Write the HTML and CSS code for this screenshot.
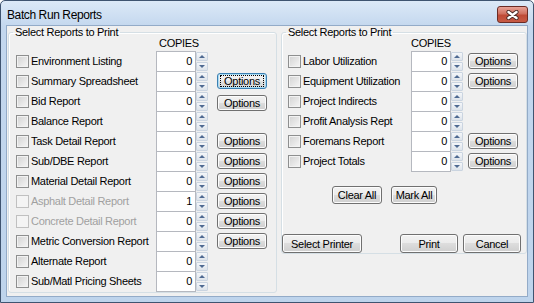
FILE: index.html
```html
<!DOCTYPE html>
<html lang="en">

<head>
    <meta charset="UTF-8">
    <meta name="viewport" content="width=device-width, initial-scale=1.0">
    <title>Batch Run Reports</title>
    <link rel="stylesheet" href="styles.css">
</head>

<body>
    <div class="window">
        <div class="titlebar">
            <span class="title">Batch Run Reports</span>
            <button class="close">
                <svg width="13" height="10" viewBox="0 0 13 10">
                    <path d="M2.5 2 L10.5 8 M10.5 2 L2.5 8" stroke="#4a2a26" stroke-width="4.2" stroke-linecap="round" />
                    <path d="M2.5 2 L10.5 8 M10.5 2 L2.5 8" stroke="#fff" stroke-width="2.4" stroke-linecap="round" />
                </svg>
            </button>
        </div>
        <div class="client">
            <fieldset class="group left-group">
                <legend>Select Reports to Print</legend>
                <div class="copies">COPIES</div>
                <div class="rows">
                    <div class="row">
                        <label class="check"><span class="box"></span>Environment Listing</label>
                        <span class="num">0</span>
                        <span class="arrows"><span class="up"></span><span class="down"></span></span>
                    </div>
                    <div class="row">
                        <label class="check"><span class="box"></span>Summary Spreadsheet</label>
                        <span class="num">0</span>
                        <span class="arrows"><span class="up"></span><span class="down"></span></span>
                        <button class="btn opt focus"><span>Options</span></button>
                    </div>
                    <div class="row">
                        <label class="check"><span class="box"></span>Bid Report</label>
                        <span class="num">0</span>
                        <span class="arrows"><span class="up"></span><span class="down"></span></span>
                        <button class="btn opt low">Options</button>
                    </div>
                    <div class="row">
                        <label class="check"><span class="box"></span>Balance Report</label>
                        <span class="num">0</span>
                        <span class="arrows"><span class="up"></span><span class="down"></span></span>
                    </div>
                    <div class="row">
                        <label class="check"><span class="box"></span>Task Detail Report</label>
                        <span class="num">0</span>
                        <span class="arrows"><span class="up"></span><span class="down"></span></span>
                        <button class="btn opt">Options</button>
                    </div>
                    <div class="row">
                        <label class="check"><span class="box"></span>Sub/DBE Report</label>
                        <span class="num">0</span>
                        <span class="arrows"><span class="up"></span><span class="down"></span></span>
                        <button class="btn opt">Options</button>
                    </div>
                    <div class="row">
                        <label class="check"><span class="box"></span>Material Detail Report</label>
                        <span class="num">0</span>
                        <span class="arrows"><span class="up"></span><span class="down"></span></span>
                        <button class="btn opt">Options</button>
                    </div>
                    <div class="row disabled">
                        <label class="check"><span class="box"></span>Asphalt Detail Report</label>
                        <span class="num">1</span>
                        <span class="arrows"><span class="up"></span><span class="down"></span></span>
                        <button class="btn opt">Options</button>
                    </div>
                    <div class="row disabled">
                        <label class="check"><span class="box"></span>Concrete Detail Report</label>
                        <span class="num">0</span>
                        <span class="arrows"><span class="up"></span><span class="down"></span></span>
                        <button class="btn opt">Options</button>
                    </div>
                    <div class="row">
                        <label class="check"><span class="box"></span>Metric Conversion Report</label>
                        <span class="num">0</span>
                        <span class="arrows"><span class="up"></span><span class="down"></span></span>
                        <button class="btn opt">Options</button>
                    </div>
                    <div class="row">
                        <label class="check"><span class="box"></span>Alternate Report</label>
                        <span class="num">0</span>
                        <span class="arrows"><span class="up"></span><span class="down"></span></span>
                    </div>
                    <div class="row">
                        <label class="check"><span class="box"></span>Sub/Matl Pricing Sheets</label>
                        <span class="num">0</span>
                        <span class="arrows"><span class="up"></span><span class="down"></span></span>
                    </div>
                </div>
            </fieldset>

            <fieldset class="group right-group">
                <legend>Select Reports to Print</legend>
                <div class="copies">COPIES</div>
                <div class="rows">
                    <div class="row">
                        <label class="check"><span class="box"></span>Labor Utilization</label>
                        <span class="num">0</span>
                        <span class="arrows"><span class="up"></span><span class="down"></span></span>
                        <button class="btn opt">Options</button>
                    </div>
                    <div class="row">
                        <label class="check"><span class="box"></span>Equipment Utilization</label>
                        <span class="num">0</span>
                        <span class="arrows"><span class="up"></span><span class="down"></span></span>
                        <button class="btn opt">Options</button>
                    </div>
                    <div class="row">
                        <label class="check"><span class="box"></span>Project Indirects</label>
                        <span class="num">0</span>
                        <span class="arrows"><span class="up"></span><span class="down"></span></span>
                    </div>
                    <div class="row">
                        <label class="check"><span class="box"></span>Profit Analysis Rept</label>
                        <span class="num">0</span>
                        <span class="arrows"><span class="up"></span><span class="down"></span></span>
                    </div>
                    <div class="row">
                        <label class="check"><span class="box"></span>Foremans Report</label>
                        <span class="num">0</span>
                        <span class="arrows"><span class="up"></span><span class="down"></span></span>
                        <button class="btn opt">Options</button>
                    </div>
                    <div class="row">
                        <label class="check"><span class="box"></span>Project Totals</label>
                        <span class="num">0</span>
                        <span class="arrows"><span class="up"></span><span class="down"></span></span>
                        <button class="btn opt">Options</button>
                    </div>
                </div>
                <div class="mark-btns">
                    <button class="btn clear-btn">Clear All</button>
                    <button class="btn mark-btn">Mark All</button>
                </div>
                <div class="bottom-btns">
                    <button class="btn printer-btn">Select Printer</button>
                    <button class="btn print-btn">Print</button>
                    <button class="btn cancel-btn">Cancel</button>
                </div>
            </fieldset>
        </div>
    </div>
</body>

</html>
```

FILE: styles.css
```css
*{
    margin: 0;
    padding: 0;
    box-sizing: border-box;
}
body{
    background-color: #fff;
    font-family: "Liberation Sans", Arial, sans-serif;
    font-size: 11px;
    letter-spacing: -0.3px;
    color: #000;
}
.window{
    width: 534px;
    height: 303px;
    border: 1px solid #3f5470;
    border-radius: 5px 5px 0 0;
    background: linear-gradient(#dce9f7, #c3d7ee 26px, #bed4ec);
    display: flex;
    flex-direction: column;
    padding: 0 6px 6px 6px;
}
.titlebar{
    height: 25px;
    display: flex;
    align-items: center;
    justify-content: space-between;
}
.title{
    font-size: 12px;
    letter-spacing: -0.4px;
    color: #000;
    padding-top: 2px;
}
.close{
    width: 31px;
    height: 17px;
    margin-right: -1px;
    margin-top: 2px;
    border: 1px solid #6b2b24;
    border-radius: 3px;
    background: linear-gradient(#e8a397, #d0705f 45%, #bf4a36 55%, #c75a44);
    display: flex;
    justify-content: center;
    align-items: center;
}
.client{
    flex: 1;
    background-color: #f0f0f0;
    outline: 1px solid #93abc8;
    display: flex;
    align-items: flex-start;
    gap: 4px;
    padding-left: 1px;
}
.group{
    border: 1px solid #d5dfe5;
    border-radius: 3px;
    box-shadow: inset 1px 1px 0 #fff;
}
.group legend{
    line-height: 13px;
    margin-left: 4px;
    padding: 0 2px;
}
.left-group{
    width: 269px;
    height: 267px;
}
.right-group{
    width: 246px;
    height: 228px;
}
.copies{
    height: 13px;
    line-height: 13px;
    margin-top: -2px;
    margin-bottom: 1px;
}
.left-group .copies{
    padding-left: 150px;
}
.right-group .copies{
    padding-left: 129px;
}
.left-group .rows{
    padding-left: 7px;
}
.right-group .rows{
    padding-left: 6px;
}
.row{
    height: 20px;
    display: flex;
    align-items: flex-start;
}
.check{
    height: 20px;
    display: flex;
    align-items: center;
    gap: 2px;
}
.left-group .check{
    width: 140px;
}
.right-group .check{
    width: 123px;
}
.box{
    width: 13px;
    height: 13px;
    border: 1px solid #8e8f8f;
    background: linear-gradient(135deg, #d2d2d2, #f6f6f6);
    box-shadow: inset 0 0 0 1px #f2f2f2;
    margin-top: 1px;
}
.disabled .check{
    color: #a0a0a0;
}
.disabled .box{
    border-color: #c0c0c0;
    background: #f4f4f4;
    box-shadow: none;
}
.num{
    width: 40px;
    height: 21px;
    border: 1px solid #b5b8bf;
    background-color: #fff;
    text-align: right;
    padding-right: 3px;
    line-height: 19px;
}
.arrows{
    width: 12px;
    height: 21px;
    display: flex;
    flex-direction: column;
    gap: 1px;
    padding: 1px 0;
}
.up, .down{
    flex: 1;
    border: 1px solid #cad4e0;
    border-radius: 1px;
    background: linear-gradient(#f4f6f9, #dde3ea);
    display: flex;
    justify-content: center;
    align-items: center;
}
.up::after{
    content: "";
    border-left: 3px solid transparent;
    border-right: 3px solid transparent;
    border-bottom: 3px solid #4f6a92;
}
.down::after{
    content: "";
    border-left: 3px solid transparent;
    border-right: 3px solid transparent;
    border-top: 3px solid #4f6a92;
}
.btn{
    font-family: "Liberation Sans", Arial, sans-serif;
    font-size: 11px;
    letter-spacing: -0.3px;
    color: #000;
    border: 1px solid #707070;
    border-radius: 3px;
    background: linear-gradient(#f2f2f2, #ebebeb 50%, #dddddd 50%, #cfcfcf);
    box-shadow: inset 0 0 0 1px #fcfcfc;
}
.opt{
    width: 50px;
    height: 16px;
    margin-top: 2px;
}
.opt.low{
    margin-top: 4px;
}
.left-group .opt{
    margin-left: 9px;
}
.right-group .opt{
    margin-left: 5px;
}
.focus{
    border-color: #3c7fb1;
    box-shadow: inset 0 0 0 1px #a8dcf5;
    background: linear-gradient(#f4f4f4, #ececec 50%, #e0e0e0 50%, #d6d6d6);
}
.focus span{
    display: block;
    margin: 1px 2px;
    border: 1px dotted #000;
    line-height: 10px;
}
.mark-btns{
    display: flex;
    gap: 9px;
    margin-top: 15px;
    padding-left: 50px;
}
.clear-btn{
    width: 50px;
    height: 18px;
}
.mark-btn{
    width: 46px;
    height: 18px;
}
.bottom-btns{
    display: flex;
    margin-top: 30px;
}
.printer-btn{
    width: 80px;
    height: 19px;
}
.print-btn{
    width: 58px;
    height: 19px;
    margin-left: 38px;
}
.cancel-btn{
    width: 58px;
    height: 19px;
    margin-left: 5px;
}
```
